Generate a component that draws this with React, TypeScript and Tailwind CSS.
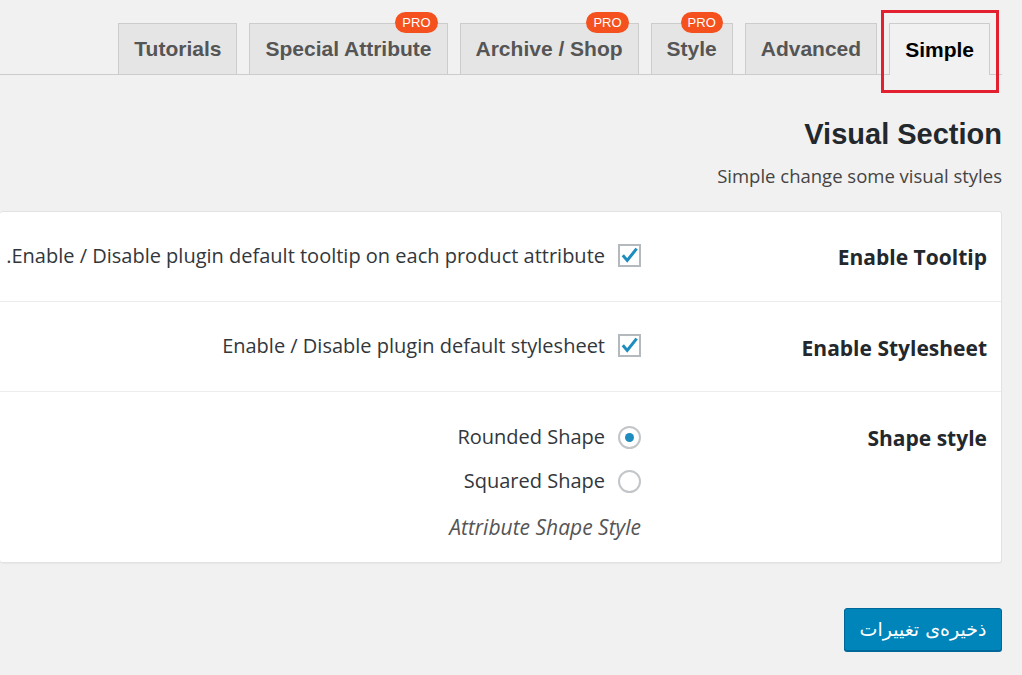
import React from "react";

const tabs = [
  { label: "Tutorials", pro: false },
  { label: "Special Attribute", pro: true },
  { label: "Archive / Shop", pro: true },
  { label: "Style", pro: true },
  { label: "Advanced", pro: false },
];

function Checkbox() {
  return (
    <span className="inline-flex h-[23px] w-[23px] shrink-0 items-center justify-center border-2 border-[#b4b9be] bg-white">
      <svg viewBox="0 0 20 20" className="h-[20px] w-[20px]" aria-hidden="true">
        <path d="M4 10.5l3.6 4.2L16.5 3.5" fill="none" stroke="#1e8cbe" strokeWidth="3.2" strokeLinecap="square" />
      </svg>
    </span>
  );
}

function Radio({ checked }: { checked?: boolean }) {
  return (
    <span className="inline-flex h-[23px] w-[23px] shrink-0 items-center justify-center rounded-full border-2 border-[#c3c6c9] bg-white">
      {checked && <span className="h-[9px] w-[9px] rounded-full bg-[#1e8cbe]" />}
    </span>
  );
}

export default function App() {
  return (
    <div
      dir="rtl"
      className="relative min-h-[675px] w-[1022px] overflow-hidden bg-[#f1f1f1] pr-[20px] font-['Open_Sans',sans-serif] text-[#32373c]"
    >
      {/* tab bar */}
      <div className="flex items-end gap-[12px] border-b border-[#ccc] pr-[12px] pt-[23px] font-['Liberation_Sans',Arial,sans-serif]">
        <div className="-mb-px flex h-[52px] items-center border border-b-0 border-[#ccc] bg-[#f1f1f1] px-[15px] text-[21px] font-bold text-black">
          Simple
        </div>
        {[...tabs].reverse().map((t) => (
          <div
            key={t.label}
            className="relative flex h-[51px] items-center border border-b-0 border-[#ccc] bg-[#e5e5e5] px-[15px] text-[21px] font-bold text-[#555]"
          >
            {t.label}
            {t.pro && (
              <span className="absolute right-[9px] top-[-12px] rounded-full bg-[#f4511e] px-[7px] py-[2px] text-[13px] leading-[17px] font-normal text-white">
                PRO
              </span>
            )}
          </div>
        ))}
      </div>

      {/* annotation */}
      <div className="pointer-events-none absolute left-[881px] top-[10px] h-[83px] w-[118px] border-[3px] border-[#e3202f]" />

      <h2 className="mt-[41px] font-['Liberation_Sans',Arial,sans-serif] text-[29px] leading-[36px] font-bold text-[#23282d]">
        Visual Section
      </h2>
      <p className="mt-[12px] text-[18.5px] leading-[24px] text-[#444]">Simple change some visual styles</p>

      <div className="mt-[23px] rounded-[3px] border border-l-0 border-[#e2e2e2] bg-white shadow-[0_1px_1px_rgba(0,0,0,0.04)]">
        <div className="flex h-[90px] border-b border-[#ececec]">
          <div className="w-[345px] shrink-0 pr-[14px] pt-[30px] text-[21px] font-bold text-[#23282d]">Enable Tooltip</div>
          <div className="flex items-start gap-[13px] pr-[15px] pt-[32px] text-[20px] leading-[24px]">
            <Checkbox />
            <span className="whitespace-nowrap">Enable / Disable plugin default tooltip on each product attribute.</span>
          </div>
        </div>
        <div className="flex h-[90px] border-b border-[#ececec]">
          <div className="w-[345px] shrink-0 pr-[14px] pt-[31px] text-[21px] font-bold text-[#23282d]">Enable Stylesheet</div>
          <div className="flex items-start gap-[13px] pr-[15px] pt-[32px] text-[20px] leading-[24px]">
            <Checkbox />
            <span>Enable / Disable plugin default stylesheet</span>
          </div>
        </div>
        <div className="flex h-[170px]">
          <div className="w-[345px] shrink-0 pr-[14px] pt-[31px] text-[21px] font-bold text-[#23282d]">Shape style</div>
          <div className="flex flex-col pr-[15px] pt-[33px] text-[20px] leading-[24px]">
            <label className="flex items-center gap-[13px]">
              <Radio checked />
              <span>Rounded Shape</span>
            </label>
            <label className="mt-[20px] flex items-center gap-[13px]">
              <Radio />
              <span>Squared Shape</span>
            </label>
            <p className="mt-[22px] text-[21px] italic text-[#555]">Attribute Shape Style</p>
          </div>
        </div>
      </div>

      <button className="mt-[45px] h-[43px] w-[158px] rounded-[3px] border border-[#006799] bg-[#0085ba] font-['DejaVu_Sans',sans-serif] text-[19px] text-white shadow-[0_1px_0_#006799]">
        ذخیره‌ی تغییرات
      </button>
    </div>
  );
}
